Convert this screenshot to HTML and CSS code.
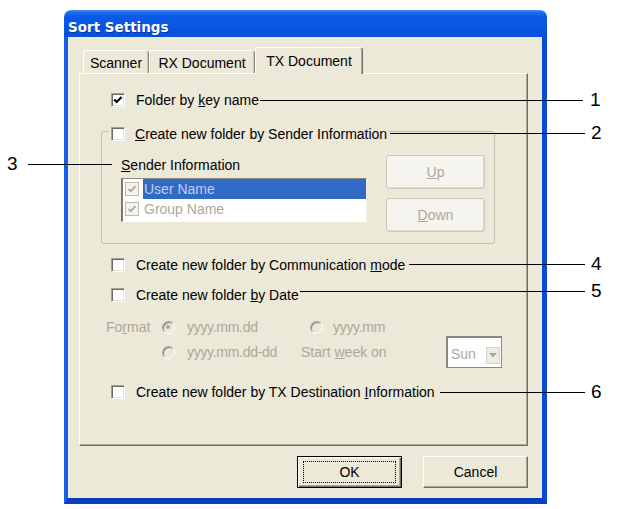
FILE: index.html
```html
<!DOCTYPE html>
<html>
<head>
<meta charset="utf-8">
<title>Sort Settings</title>
<link rel="stylesheet" href="styles.css">
</head>
<body>
<div class="stage">
  <div class="window">
    <div class="titlebar"><span class="title">Sort Settings</span></div>
    <div class="client">
      <div class="tabs">
        <div class="tab t1">Scanner</div>
        <div class="tab t2">RX Document</div>
        <div class="tab t3">TX Document</div>
      </div>
      <div class="panel">
        <div class="row">
          <span class="cb"><svg width="12" height="12" viewBox="0 0 12 12"><path d="M2.3 5.6 L4.6 8 L9.6 3" fill="none" stroke="#000" stroke-width="2.2"/></svg></span>
          <span>Folder by <u>k</u>ey name</span>
        </div>
        <div class="group">
          <div class="legend">
            <span class="cb"></span>
            <span><u>C</u>reate new folder by Sender Information</span>
          </div>
          <div class="gbody">
            <div class="sender">
              <div class="slabel"><u>S</u>ender Information</div>
              <div class="listbox">
                <div class="item sel">
                  <span class="lcb"><svg width="12" height="12" viewBox="0 0 12 12"><path d="M2.5 5.8 L4.8 8.2 L9.5 3.2" fill="none" stroke="#aca899" stroke-width="1.8"/></svg></span>
                  <span class="itext">User Name</span>
                </div>
                <div class="item">
                  <span class="lcb"><svg width="12" height="12" viewBox="0 0 12 12"><path d="M2.5 5.8 L4.8 8.2 L9.5 3.2" fill="none" stroke="#aca899" stroke-width="1.8"/></svg></span>
                  <span class="itext">Group Name</span>
                </div>
              </div>
            </div>
            <div class="side">
              <div class="sbtn"><span><u>U</u>p</span></div>
              <div class="sbtn"><span><u>D</u>own</span></div>
            </div>
          </div>
        </div>
        <div class="row r4">
          <span class="cb"></span>
          <span>Create new folder by Communication <u>m</u>ode</span>
        </div>
        <div class="row r5">
          <span class="cb"></span>
          <span>Create new folder <u>b</u>y Date</span>
        </div>
        <div class="format">
          <div class="flabel">Fo<u>r</u>mat</div>
          <div class="fgrid">
            <div class="opt"><span class="radio on"></span><span class="ytext">yyyy.mm.dd</span></div>
            <div class="opt opt2"><span class="radio"></span><span class="ytext">yyyy.mm</span></div>
            <div></div>
            <div class="opt"><span class="radio"></span><span class="ytext">yyyy.mm.dd-dd</span></div>
            <div class="opt"><span>Start <u>w</u>eek on</span></div>
            <div class="combo">
              <span class="ctext">Sun</span>
              <span class="cbtn"><svg width="8" height="5" viewBox="0 0 8 5"><path d="M0 0 H8 L4 4.5 Z" fill="#aca899"/></svg></span>
            </div>
          </div>
        </div>
        <div class="row r6">
          <span class="cb"></span>
          <span>Create new folder by TX Destination <u>I</u>nformation</span>
        </div>
      </div>
      <div class="buttons">
        <div class="pbtn default"><span class="focus">OK</span></div>
        <div class="pbtn">Cancel</div>
      </div>
    </div>
  </div>

  <div class="cline l1"></div><div class="cnum n1">1</div>
  <div class="cline l2"></div><div class="cnum n2">2</div>
  <div class="cline l3"></div><div class="cnum n3">3</div>
  <div class="cline l4"></div><div class="cnum n4">4</div>
  <div class="cline l5"></div><div class="cnum n5">5</div>
  <div class="cline l6"></div><div class="cnum n6">6</div>
</div>
</body>
</html>
```
FILE: styles.css
```css
* { box-sizing: border-box; }
body {
  margin: 0;
  background: #fff;
  font-family: "Liberation Sans", Arial, sans-serif;
  font-size: 14px;
  color: #000;
}
.stage {
  position: relative;
  width: 617px;
  height: 509px;
  padding-top: 10px;
  overflow: hidden;
}
.window {
  margin-left: 64px;
  width: 483px;
  height: 494px;
  display: flex;
  flex-direction: column;
}
.titlebar {
  height: 27px;
  flex: none;
  border-radius: 7px 7px 0 0;
  background: linear-gradient(to bottom, #4a97fa 0, #2470f0 2px, #0c5be8 6px, #0856e2 60%, #0a4fd8 100%);
  padding: 9px 0 0 4px;
}
.title {
  color: #fff;
  font: bold 13.5px/15px "DejaVu Sans", Verdana, sans-serif;
  text-shadow: 1px 1px 0 rgba(10, 30, 110, 0.5);
}
.client {
  flex: 1;
  background: #ECE9D8;
  border-style: solid;
  border-width: 0 5px 6px 4px;
  border-color: #0b55e0 #0a4bd4 #0a3fb8 #1461ea;
  padding: 10px 14px 0 11px;
}
.tabs {
  display: flex;
  align-items: flex-end;
  height: 27px;
  margin: 0 0 -1px 4px;
  position: relative;
  z-index: 1;
}
.tab {
  height: 23px;
  margin-bottom: 1px;
  border: 1px solid;
  border-bottom: 0;
  border-color: #fff #8c8a7f #fff #fff;
  box-shadow: inset -1px 0 #cbc8bb;
  border-radius: 3px 3px 0 0;
  display: flex;
  align-items: center;
  justify-content: center;
  background: #ECE9D8;
  padding-top: 1px;
  white-space: nowrap;
}
.t1 { width: 66px; }
.t2 { width: 106px; }
.t3 {
  width: 108px;
  height: 27px;
  margin-bottom: 0;
  border-right-color: #716f64;
  box-shadow: inset -1px 0 #aca899;
  padding-top: 0;
  padding-bottom: 1px;
}
.panel {
  height: 373px;
  border: 1px solid;
  border-color: #fff #716f64 #716f64 #fff;
  box-shadow: inset -1px -1px #aca899;
  padding-top: 18px;
}
.row {
  display: flex;
  align-items: center;
  height: 16px;
  line-height: 16px;
  margin-left: 31px;
  white-space: nowrap;
}
.cb {
  width: 14px;
  height: 14px;
  flex: none;
  margin-right: 11px;
  background: #fff;
  border: 1px solid;
  border-color: #a3a196 #fff #fff #a3a196;
  box-shadow: inset 1px 1px #6e6c62, inset -1px -1px #e6e4d8;
}
.cb svg { display: block; }
.group {
  margin: 23px 0 0 21px;
  width: 394px;
  height: 113px;
  border: 1px solid #c3c0b1;
  border-radius: 3px;
}
.legend {
  display: flex;
  align-items: center;
  width: max-content;
  height: 16px;
  line-height: 16px;
  margin: -6px 0 0 7px;
  padding: 0 2px;
  background: #ECE9D8;
  white-space: nowrap;
}
.legend .cb { margin-right: 10px; }
.gbody {
  display: flex;
  margin-top: 13px;
  padding-left: 19px;
}
.sender { padding-top: 2px; }
.slabel { height: 16px; line-height: 16px; white-space: nowrap; }
.listbox {
  margin-top: 5px;
  width: 246px;
  height: 44px;
  background: #fff;
  border-style: solid;
  border-width: 1px 1px 1px 2px;
  border-color: #8a887d #f2f0e6 #fff #7b796e;
  padding-left: 2px;
}
.item {
  display: flex;
  align-items: center;
  height: 20px;
}
.lcb {
  width: 14px;
  height: 14px;
  flex: none;
  margin-right: 4px;
  border: 1px solid #bdbaad;
  background: #f4f3ee;
}
.lcb svg { display: block; }
.itext {
  flex: 1;
  height: 20px;
  line-height: 20px;
  padding-left: 1px;
  color: #aca899;
  white-space: nowrap;
}
.sel .itext {
  background: #316ac5;
  color: #c3cde6;
}
.side {
  margin-left: 19px;
  display: flex;
  flex-direction: column;
  gap: 9px;
}
.sbtn {
  width: 99px;
  height: 34px;
  border: 1px solid #cac8bb;
  border-radius: 3px;
  background: #f5f4ee;
  color: #aca899;
  display: flex;
  align-items: center;
  justify-content: center;
  box-shadow: inset -1px -1px #e0ded2;
}
.r4 { margin-top: 13px; }
.r5 { margin-top: 14px; }
.format {
  display: flex;
  margin: 16px 0 0 26px;
  color: #aca899;
}
.flabel {
  width: 56px;
  height: 16px;
  line-height: 16px;
}
.fgrid {
  display: grid;
  grid-template-columns: 139px 145px 56px;
  grid-template-rows: 16px 16px;
  row-gap: 9px;
}
.opt {
  display: flex;
  align-items: center;
  height: 16px;
  line-height: 16px;
  white-space: nowrap;
}
.ytext { letter-spacing: -0.3px; }
.radio {
  width: 13px;
  height: 13px;
  flex: none;
  margin-right: 12px;
  border-radius: 50%;
  border: 1px solid;
  border-color: #a7a59a #fff #fff #a7a59a;
  box-shadow: inset 1px 1px #8a887e;
  background: #ECE9D8;
  position: relative;
}
.radio.on::after {
  content: "";
  position: absolute;
  left: 3px;
  top: 3px;
  width: 4px;
  height: 4px;
  border-radius: 50%;
  background: #aca899;
}
.opt2 { padding-left: 9px; }
.opt2 .radio { margin-right: 10px; }
.combo {
  margin: -8px 0;
  height: 32px;
  width: 56px;
  display: flex;
  align-items: center;
  background: #fff;
  border: 1px solid #8c8a80;
  box-shadow: inset 1px 1px #8c8a80;
  padding: 0 1px 0 4px;
}
.ctext { color: #aca899; padding-top: 3px; }
.cbtn {
  margin-left: auto;
  width: 14px;
  height: 17px;
  margin-top: 7px;
  background: #eeede5;
  border: 1px solid #d5d3c7;
  display: flex;
  align-items: center;
  justify-content: center;
}
.cbtn svg { display: block; }
.r6 { margin-top: 24px; }
.buttons {
  display: flex;
  justify-content: flex-end;
  gap: 21px;
  margin-top: 10px;
}
.pbtn {
  width: 105px;
  height: 32px;
  display: flex;
  align-items: center;
  justify-content: center;
  border: 1px solid;
  border-color: #fff #716f64 #716f64 #fff;
  box-shadow: inset -1px -1px #aca899;
  background: #ECE9D8;
}
.pbtn.default {
  border: 1px solid #000;
  box-shadow: inset 1px 1px #fff, inset -1px -1px #716f64, inset -2px -2px #aca899;
}
.focus {
  width: 93px;
  height: 22px;
  border: 1px dotted #000;
  display: flex;
  align-items: center;
  justify-content: center;
}

/* callouts */
.cline {
  position: absolute;
  height: 1px;
  background: #000;
}
.l1 { top: 100px; left: 260px; width: 323px; }
.l2 { top: 133px; left: 390px; width: 195px; }
.l3 { top: 164px; left: 28px; width: 84px; }
.l4 { top: 264px; left: 409px; width: 176px; }
.l5 { top: 291px; left: 300px; width: 285px; }
.l6 { top: 392px; left: 440px; width: 145px; }
.cnum {
  position: absolute;
  font-size: 19px;
  line-height: 20px;
  left: 591px;
}
.n1 { top: 90px; left: 590px; }
.n2 { top: 123px; }
.n3 { top: 154px; left: 7px; }
.n4 { top: 254px; }
.n5 { top: 281px; }
.n6 { top: 382px; }
```
